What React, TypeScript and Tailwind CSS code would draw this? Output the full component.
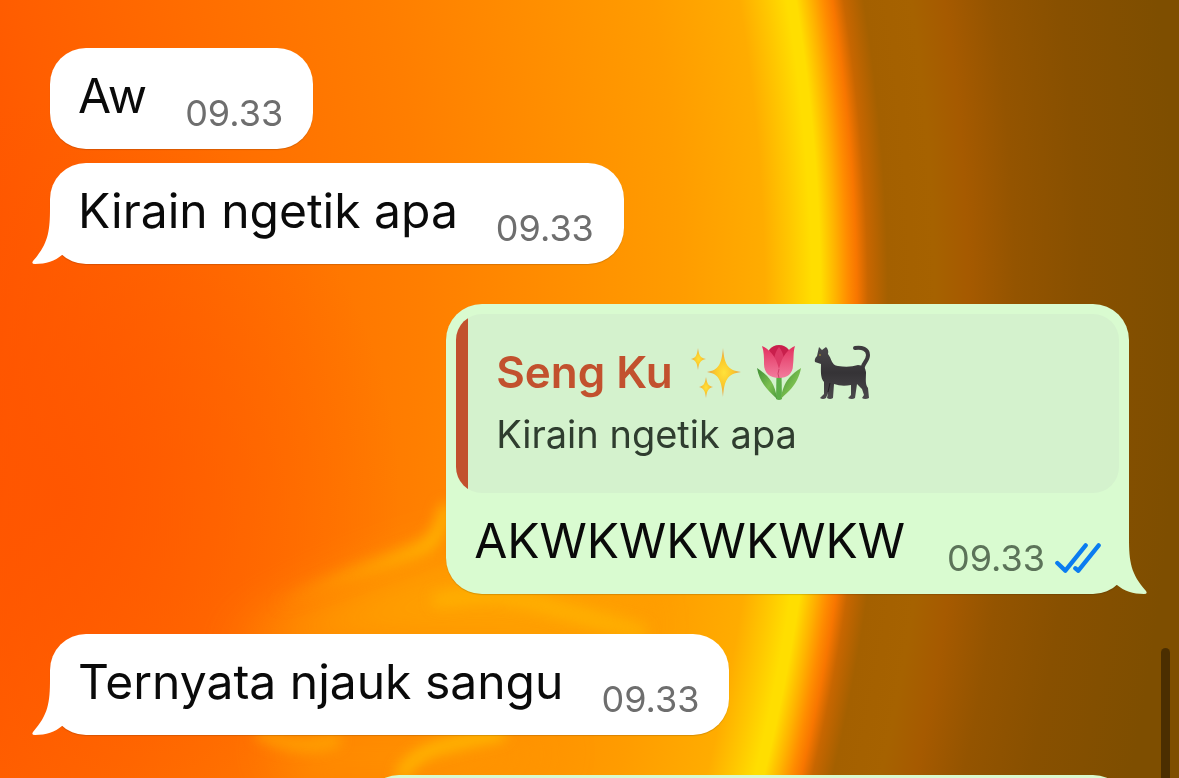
import React from 'react';
import clsx from 'clsx';

interface Message {
  id: number;
  text: string;
  time: string;
  mine?: boolean;
  tail?: boolean;
  quote?: { author: string; text: string };
}

const messages: Message[] = [
  { id: 1, text: 'Aw', time: '09.33' },
  { id: 2, text: 'Kirain ngetik apa', time: '09.33', tail: true },
  {
    id: 3,
    text: 'AKWKWKWKWKW',
    time: '09.33',
    mine: true,
    tail: true,
    quote: { author: 'Seng Ku', text: 'Kirain ngetik apa' },
  },
  { id: 4, text: 'Ternyata njauk sangu', time: '09.33', tail: true },
];

// x position along the middle row -> colour
const glow: [number, string][] = [
  [-20, '#ff5600'],
  [60, '#ff5e00'],
  [240, '#ff6e00'],
  [420, '#ff7e00'],
  [560, '#ff8e00'],
  [680, '#ff9c00'],
  [765, '#ffac00'],
  [792, '#ffc800'],
  [812, '#ffde00'],
  [821, '#ffde00'],
  [836, '#ffb200'],
  [848, '#ff8c00'],
  [857, '#f87600'],
  [868, '#c86600'],
  [888, '#a46000'],
  [935, '#a66200'],
  [968, '#a65a00'],
  [1015, '#945400'],
  [1080, '#885000'],
  [1179, '#7e4e00'],
];

const Wallpaper = () => (
  <svg
    className="absolute inset-0 h-full w-full"
    viewBox="0 0 1179 778"
    preserveAspectRatio="xMidYMid slice"
    aria-hidden="true"
  >
    <defs>
      <radialGradient id="sun" gradientUnits="userSpaceOnUse" cx="-1103" cy="310" r="2400">
        {glow.map(([x, color]) => (
          <stop key={x} offset={(x + 1103) / 2400} stopColor={color} />
        ))}
      </radialGradient>
      <radialGradient id="ember">
        <stop offset="0" stopColor="#ff5400" />
        <stop offset="1" stopColor="#ff5400" stopOpacity="0" />
      </radialGradient>
      <linearGradient id="streak" gradientUnits="userSpaceOnUse" x1="270" y1="600" x2="430" y2="545">
        <stop offset="0" stopColor="#ffb400" stopOpacity="0" />
        <stop offset="1" stopColor="#ffc000" />
      </linearGradient>
      <filter id="soft" x="-50%" y="-50%" width="200%" height="200%">
        <feGaussianBlur stdDeviation="26" />
      </filter>
      <filter id="wisp" x="-50%" y="-50%" width="200%" height="200%">
        <feGaussianBlur stdDeviation="7" />
      </filter>
    </defs>
    <rect width="1179" height="778" fill="url(#sun)" />
    <ellipse cx="60" cy="500" rx="340" ry="400" fill="url(#ember)" opacity="0.8" />
    <path d="M230 650 Q320 590 450 550 L640 600 L640 650 Z" fill="#ffa800" opacity="0.8" filter="url(#soft)" />
    <path d="M270 735 L460 735 L560 750 L480 778 L290 778 Z" fill="#ffa800" opacity="0.5" filter="url(#soft)" />
    <g fill="none" strokeLinecap="round" filter="url(#wisp)">
      <path d="M270 608 Q330 582 370 568 T426 546 Q440 536 446 510" stroke="url(#streak)" strokeWidth="13" opacity="0.8" />
      <path d="M440 600 Q500 588 560 610 L640 632" stroke="#ffc000" strokeWidth="16" opacity="0.5" />
      <path d="M402 774 Q414 754 440 747 T500 734" stroke="#ffcc00" strokeWidth="12" opacity="0.7" />
      <path d="M262 734 Q300 752 335 740" stroke="#ffc400" strokeWidth="12" opacity="0.5" />
    </g>
  </svg>
);

const Tail = ({ mine }: { mine?: boolean }) => (
  <svg
    className={clsx(
      'absolute bottom-0 h-[62px] w-[48px]',
      mine ? '-right-[18px] -scale-x-100 text-[#d9fbd0]' : '-left-[18px] text-white'
    )}
    viewBox="0 12 48 62"
    fill="currentColor"
    aria-hidden="true"
  >
    <path d="M18 12V18C18 42 16 54 1 71Q-1 74 3 74C14 74 23 71 30 65L48 56V12Z" />
  </svg>
);

const Ticks = () => (
  <svg className="h-[30px] w-[46px]" viewBox="0 0 138 90" role="img" aria-label="Dibaca">
    <g fill="none" stroke="#0b7cf0" strokeWidth="13" strokeLinecap="round" strokeLinejoin="round">
      <path d="M7 60L31 83L92 7" />
      <path d="M61 76L70 83L131 7" />
    </g>
  </svg>
);

const Sparkles = () => (
  <svg className="size-14" viewBox="0 0 56 56" role="img" aria-label="sparkles">
    <defs>
      <radialGradient id="gold">
        <stop offset="0" stopColor="#ffe23a" />
        <stop offset="0.5" stopColor="#fbc92c" />
        <stop offset="1" stopColor="#e59a4c" />
      </radialGradient>
    </defs>
    <g fill="url(#gold)">
      <path d="M35 4C36.500 20 39 26 53 28C39 30 36.500 36 35 53C33.500 36 31 30 19 28C31 26 33.500 20 35 4Z" />
      <path d="M10 4C11 11 12 14 18 15C12 16.500 11 19 10 26C9 19 8 16.500 3 15C8 14 9 11 10 4Z" />
      <path d="M18 33C19 39 20 42 25 43C20 44.500 19 47 18 54C17 47 16 44.500 11 43C16 42 17 39 18 33Z" />
    </g>
  </svg>
);

const Tulip = () => (
  <svg className="size-14" viewBox="0 0 56 56" role="img" aria-label="tulip">
    <defs>
      <linearGradient id="petal" x1="0" y1="0" x2="0" y2="1">
        <stop offset="0" stopColor="#e3305f" />
        <stop offset="1" stopColor="#f27c9d" />
      </linearGradient>
      <linearGradient id="leaf" x1="0" y1="0" x2="1" y2="1">
        <stop offset="0" stopColor="#3f8f36" />
        <stop offset="0.6" stopColor="#7cc04f" />
        <stop offset="1" stopColor="#4a9a3c" />
      </linearGradient>
    </defs>
    <path d="M25.500 30H30.500L31 55Q28 57 25 55Z" fill="#5cae48" />
    <path d="M6 24C15 30 24 37 26 55C22 50 9 42 6 24Z" fill="url(#leaf)" />
    <path d="M50 24C41 30 32 37 30 55C34 50 47 42 50 24Z" fill="url(#leaf)" />
    <path d="M18 6Q22 1 28 1T38 6L36 24H20Z" fill="#c91f4c" />
    <path d="M28 3C23 9 20 20 28 32C36 20 33 9 28 3Z" fill="#dc3a66" />
    <path d="M11 2C18 5 25 12 28 25C31 12 37 5 44 2C42 8 43 14 42 21C42 30 36 34 28 34C19 34 13 29 13 20C13 13 13 8 11 2Z" fill="url(#petal)" />
    <path d="M28 25Q26 30 28 34" fill="none" stroke="#cf3f68" strokeWidth="1" />
  </svg>
);

const Cat = () => (
  <svg className="size-14" viewBox="0 0 56 56" role="img" aria-label="black cat">
    <defs>
      <linearGradient id="fur" x1="0" y1="0" x2="0" y2="1">
        <stop offset="0" stopColor="#4a484b" />
        <stop offset="0.5" stopColor="#353336" />
        <stop offset="1" stopColor="#4b494c" />
      </linearGradient>
    </defs>
    <path d="M49 26C47 20 54 18 54 11C54 5 48 3 41 4" fill="none" stroke="#3d3b3e" strokeWidth="4" strokeLinecap="round" />
    <path
      d="M5 3L8 6L12 3Q15 6 14 10C18 15 17 21 24 22Q35 24 44 21Q51 21 52 28C52 36 51 40 54 44L55 54Q51 56 48 54L50 51L48 45L43 40L41 54Q38 56 34 54L37 51L37 41Q28 43 20 40L19 54Q16 56 13 54L14 49L12 54Q9 56 6 54L10 50L10 38C6 34 7 25 7 20L1 18Q0 15 3 12Z"
      fill="url(#fur)"
    />
    <circle cx="6" cy="11" r="1" fill="#8c7b3a" />
    <path d="M14 48L16 39" stroke="#222023" strokeWidth="1" />
  </svg>
);

const Bubble = ({ message }: { message: Message }) => {
  const { text, time, mine, tail, quote } = message;
  return (
    <article
      className={clsx(
        'relative w-fit rounded-[36px] shadow-[0_1px_1px_rgba(0,0,0,0.15)]',
        mine ? 'bg-[#d9fbd0]' : 'bg-white'
      )}
    >
      {tail && <Tail mine={mine} />}
      {quote && (
        <div className="p-[10px] pb-0">
          <blockquote className="flex h-[179px] overflow-hidden rounded-[26px] bg-[#d4f2cd]">
            <span className="w-3 bg-[#c2512e]" />
            <div className="pt-7 pl-7">
              <div className="flex items-center gap-[7px]">
                <cite className="mr-2 text-[44px] leading-[60px] font-semibold text-[#c2512e] not-italic">
                  {quote.author}
                </cite>
                <Sparkles />
                <Tulip />
                <Cat />
              </div>
              <p className="text-[38px] leading-[64px] text-[#2f3d2f]">{quote.text}</p>
            </div>
          </blockquote>
        </div>
      )}
      <div className={clsx('relative flex h-[101px] pt-4 pl-7', mine ? 'gap-[42px] pr-7' : 'gap-[38px] pr-[30px]')}>
        <p className="text-[48px] leading-[64px] whitespace-nowrap text-[#0a0a0a]">{text}</p>
        <div className={clsx('flex items-center gap-[10px] self-end pb-[13px]', mine ? 'text-[#5c7359]' : 'text-[#6e6e6e]')}>
          <time className="text-[36px] leading-[46px]">{time}</time>
          {mine && <Ticks />}
        </div>
      </div>
    </article>
  );
};

const App = () => {
  return (
    <main className="relative h-screen overflow-hidden bg-[#ff7a00] font-['Inter','Liberation_Sans',sans-serif]">
      <Wallpaper />
      <section className="relative flex flex-col px-[50px] pt-12">
        {messages.map((message, i) => {
          const prev = messages[i - 1];
          const sameSender = prev && !!prev.mine === !!message.mine;
          return (
            <div
              key={message.id}
              className={clsx('flex', message.mine && 'justify-end', prev && (sameSender ? 'mt-[14px]' : 'mt-10'))}
            >
              <Bubble message={message} />
            </div>
          );
        })}
        {/* next outgoing message, still below the fold */}
        <div className="mt-10 ml-auto h-[101px] w-[71%] rounded-[36px] bg-[#d9fbd0]" />
      </section>
      <div className="absolute right-[9px] bottom-0 h-[130px] w-[9px] rounded-t-full bg-black/40" />
    </main>
  );
};

export default App;
